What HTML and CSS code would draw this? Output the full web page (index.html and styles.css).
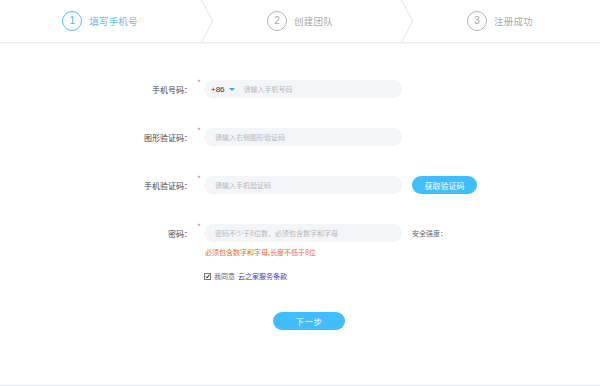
FILE: index.html
```html
<!DOCTYPE html>
<html lang="zh">
<head>
<meta charset="utf-8">
<title>注册</title>
<link rel="stylesheet" href="styles.css">
</head>
<body>
<div class="page">
  <header class="steps">
    <div class="step active">
      <span class="circle">1</span><span class="step-text">填写手机号</span>
      <svg class="chev" width="14" height="42" viewBox="0 0 14 42"><polyline points="1.5,0 12.5,21 1.5,42" fill="none" stroke="#e6e6e6" stroke-width="1"/></svg>
    </div>
    <div class="step">
      <span class="circle">2</span><span class="step-text">创建团队</span>
      <svg class="chev" width="14" height="42" viewBox="0 0 14 42"><polyline points="1.5,0 12.5,21 1.5,42" fill="none" stroke="#e6e6e6" stroke-width="1"/></svg>
    </div>
    <div class="step">
      <span class="circle">3</span><span class="step-text">注册成功</span>
    </div>
  </header>

  <main class="form">
    <div class="row">
      <label class="label">手机号码：</label><span class="req">*</span>
      <div class="input">
        <span class="code">+86</span><span class="tri"></span>
        <span class="ph">请输入手机号码</span>
      </div>
    </div>
    <div class="row">
      <label class="label">图形验证码：</label><span class="req">*</span>
      <div class="input"><span class="ph">请输入右侧图形验证码</span></div>
    </div>
    <div class="row">
      <label class="label">手机验证码：</label><span class="req">*</span>
      <div class="input"><span class="ph">请输入手机验证码</span></div>
      <button class="btn-code">获取验证码</button>
    </div>
    <div class="row row-pw">
      <label class="label">密码：</label><span class="req">*</span>
      <div class="input"><span class="ph">密码不少于8位数，必须包含数字和字母</span></div>
      <span class="strength">安全强度：</span>
    </div>
    <div class="error">必须包含数字和字母,长度不低于8位</div>
    <div class="agree">
      <span class="check"><svg width="7" height="7" viewBox="0 0 7 7"><polyline points="1.2,3.4 2.9,5.4 6,1" fill="none" stroke="#222" stroke-width="1.4"/></svg></span>
      <span class="agree-text">我同意</span><a class="link">云之家服务条款</a>
    </div>
    <div class="next-wrap"><button class="btn-next">下一步</button></div>
  </main>
</div>
</body>
</html>
```

FILE: styles.css
```css
* { box-sizing: border-box; }
html, body { margin: 0; padding: 0; background: #fff; }
body {
  font-family: "Microsoft YaHei", "Noto Sans CJK SC", "Liberation Sans", sans-serif;
  color: #555;
  width: 600px;
  height: 386px;
  overflow: hidden;
}
.page {
  height: 386px;
  border-bottom: 1px solid #dde6ee;
}
.steps {
  display: flex;
  height: 43px;
  border-bottom: 1px solid #ececec;
  box-shadow: 0 1px 1px rgba(0,0,0,0.03);
}
.step {
  position: relative;
  width: 200px;
  display: flex;
  align-items: center;
  justify-content: center;
  gap: 7px;
  color: #a8a8a8;
}
.step .circle {
  width: 20px;
  height: 20px;
  border: 1.5px solid #b4b4b4;
  border-radius: 50%;
  display: flex;
  align-items: center;
  justify-content: center;
  font-size: 10px;
  font-family: "Liberation Sans", sans-serif;
  color: #a8a8a8;
  margin-top: -1px;
}
.step .step-text { font-size: 9.5px; letter-spacing: 0.2px; margin-top: -1px; }
.step.active .circle { border-color: #4fc0fb; color: #4fb6ee; }
.step.active .step-text { color: #6fb9ec; }
.chev { position: absolute; right: -14px; top: 0; }

.form { padding-top: 37px; }
.row {
  display: flex;
  align-items: center;
  height: 18px;
  margin-bottom: 30px;
}
.row-pw { margin-bottom: 0; }
.label {
  width: 193px;
  text-align: right;
  font-size: 8px;
  color: #444;
  padding-right: 1px;
}
.req {
  width: 11px;
  align-self: flex-start;
  text-align: center;
  color: #f06a6a;
  font-size: 8px;
  line-height: 8px;
  margin-top: -1px;
  padding-left: 1px;
}
.input {
  width: 198px;
  height: 18px;
  border-radius: 9px;
  background: #f3f5f9;
  display: flex;
  align-items: center;
  padding-left: 11px;
}
.code {
  font-family: "Liberation Sans", sans-serif;
  font-size: 8px;
  color: #333;
  margin-left: -4px;
}
.tri {
  width: 0; height: 0;
  border-left: 3px solid transparent;
  border-right: 3px solid transparent;
  border-top: 3.5px solid #3aa7ef;
  margin-left: 4px;
  margin-right: 9px;
}
.ph { font-size: 7px; color: #b5b7bb; }
.btn-code {
  margin-left: 10px;
  width: 65px;
  height: 18px;
  border: none;
  border-radius: 9px;
  background: #41bcfd;
  color: #fff;
  font-family: inherit;
  font-size: 8px;
  padding: 0;
}
.strength {
  margin-left: 10px;
  font-size: 7px;
  color: #666;
}
.error {
  margin-left: 205px;
  margin-top: 6px;
  font-size: 7px;
  color: #ee6a3c;
  height: 9px;
  line-height: 9px;
}
.agree {
  margin-left: 204px;
  margin-top: 15px;
  display: flex;
  align-items: center;
  height: 8px;
}
.check {
  width: 7px;
  height: 7px;
  border: 1px solid #777;
  background: #fff;
  display: flex;
  align-items: center;
  justify-content: center;
  margin-right: 3px;
}
.check svg { display: block; }
.agree-text { font-size: 7px; color: #666; margin-right: 3px; }
.link { font-size: 7px; color: #3b3bcc; }
.next-wrap {
  display: flex;
  margin-top: 32px;
  padding-left: 273px;
}
.btn-next {
  width: 72px;
  height: 18px;
  border: none;
  border-radius: 9px;
  background: #41bcfd;
  color: #fff;
  font-family: inherit;
  font-size: 8.5px;
  padding: 0;
  letter-spacing: 0.5px;
}
```
